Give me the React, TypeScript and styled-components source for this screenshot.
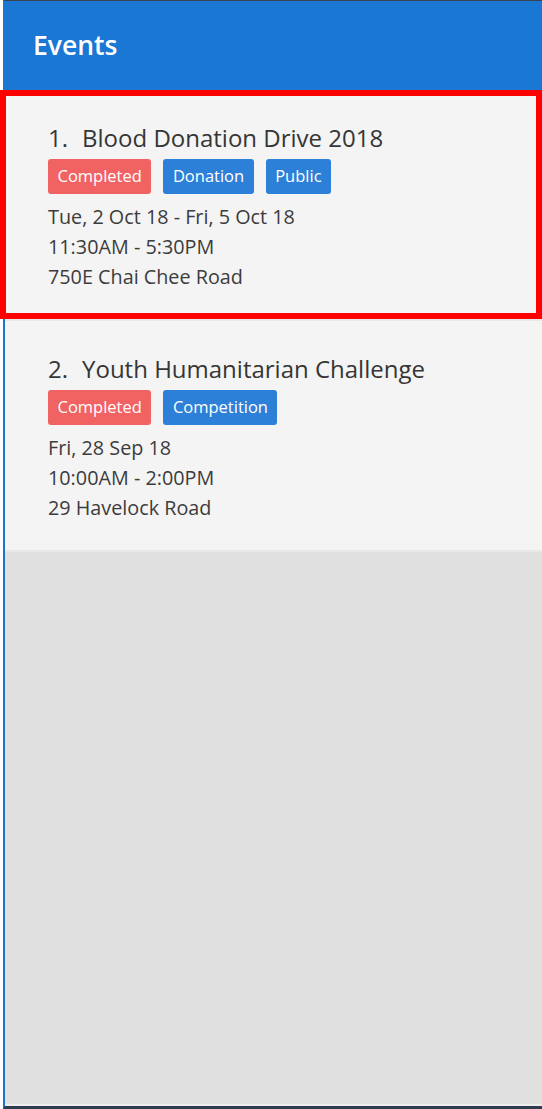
import React from "react";
import styled, { createGlobalStyle } from "styled-components";

const Global = createGlobalStyle`
  html, body { margin: 0; padding: 0; background: #ffffff; }
  body { font-family: "Open Sans", "Noto Sans", sans-serif; }
  * { box-sizing: border-box; }
`;

const Page = styled.div`
  position: relative;
  width: 542px;
  height: 1109px;
  padding-left: 3px;
`;

const Frame = styled.div`
  display: flex;
  flex-direction: column;
  height: 100%;
  border-top: 1px solid #39434f;
  border-left: 2px solid #1c74cf;
  border-bottom: 3px solid #2e3d4e;
  background: #e0e0e0;
`;

const Header = styled.header`
  display: flex;
  align-items: center;
  height: 89px;
  margin-left: -2px;
  padding-left: 30px;
  padding-bottom: 1px;
  background: #1a77d3;
  color: #ffffff;
  font-weight: 600;
  font-size: 26.5px;
`;

const List = styled.div`
  flex: 1;
  display: flex;
  flex-direction: column;
  border-bottom: 2px solid #eeeeee;
`;

const Card = styled.article`
  height: 231px;
  padding: 31px 0 0 43px;
  background: #f4f4f4;
  border-bottom: 2px solid #e8e8e8;
  color: #3c3c3c;
`;

const Title = styled.h2`
  margin: 0;
  font-weight: 400;
  font-size: 24px;
  line-height: 34px;
  color: #363636;
`;

const Index = styled.span`
  display: inline-block;
  margin-right: 14px;
`;

const Badges = styled.div`
  display: flex;
  gap: 12px;
  margin-top: 4px;
  margin-bottom: 8px;
`;

const Badge = styled.span<{ $tone: "red" | "blue" }>`
  display: inline-flex;
  align-items: center;
  height: 35px;
  padding: 0 9.5px 2px;
  border-radius: 3px;
  background: ${(p) => (p.$tone === "red" ? "#f16363" : "#2d80d7")};
  color: #ffffff;
  font-size: 16.5px;
`;

const Line = styled.div`
  font-size: 19.8px;
  line-height: 30px;
  color: #3c3c3c;
`;

const Highlight = styled.div`
  position: absolute;
  left: 0;
  top: 90px;
  width: 542px;
  height: 229px;
  border: 6px solid #ff0000;
  pointer-events: none;
`;

type Ev = {
  title: string;
  tags: { label: string; tone: "red" | "blue" }[];
  date: string;
  time: string;
  venue: string;
};

const events: Ev[] = [
  {
    title: "Blood Donation Drive 2018",
    tags: [
      { label: "Completed", tone: "red" },
      { label: "Donation", tone: "blue" },
      { label: "Public", tone: "blue" },
    ],
    date: "Tue, 2 Oct 18 - Fri, 5 Oct 18",
    time: "11:30AM - 5:30PM",
    venue: "750E Chai Chee Road",
  },
  {
    title: "Youth Humanitarian Challenge",
    tags: [
      { label: "Completed", tone: "red" },
      { label: "Competition", tone: "blue" },
    ],
    date: "Fri, 28 Sep 18",
    time: "10:00AM - 2:00PM",
    venue: "29 Havelock Road",
  },
];

export default function App() {
  return (
    <Page>
      <Global />
      <Frame>
        <Header>Events</Header>
        <List>
          {events.map((e, i) => (
            <Card key={e.title}>
              <Title>
                <Index>{i + 1}.</Index>
                {e.title}
              </Title>
              <Badges>
                {e.tags.map((t) => (
                  <Badge key={t.label} $tone={t.tone}>
                    {t.label}
                  </Badge>
                ))}
              </Badges>
              <Line>{e.date}</Line>
              <Line>{e.time}</Line>
              <Line>{e.venue}</Line>
            </Card>
          ))}
        </List>
      </Frame>
      <Highlight />
    </Page>
  );
}
